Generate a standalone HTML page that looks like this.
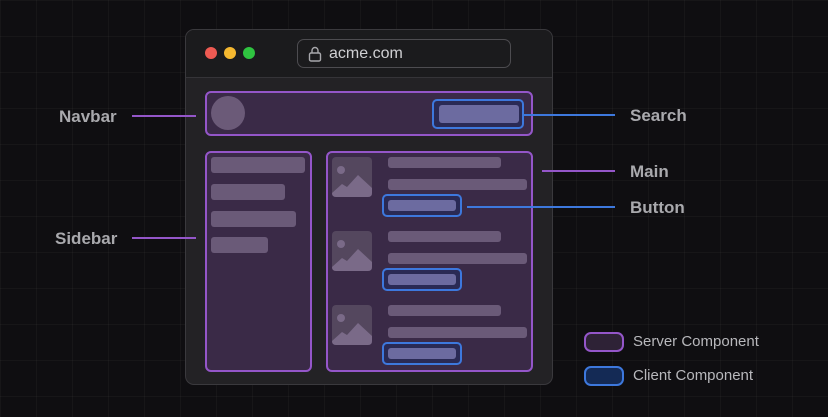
<!DOCTYPE html><html><head><style>
*{margin:0;padding:0;box-sizing:border-box}
body{width:828px;height:417px;overflow:hidden;background:#0f0e11;position:relative;font-family:"Liberation Sans",sans-serif;
background-image:linear-gradient(rgba(255,255,255,0.03) 1px,transparent 1px),linear-gradient(90deg,rgba(255,255,255,0.03) 1px,transparent 1px);background-size:36px 36px}
.a{position:absolute}
.win{left:185px;top:29px;width:368px;height:356px;border-radius:9px;background:#232225;border:1px solid #3a393d;overflow:hidden}
.tb{left:0;top:0;width:100%;height:48px;background:#1b1b1d;border-bottom:1px solid #353438}
.dot{width:12px;height:12px;border-radius:50%;top:17px}
.url{left:111px;top:9px;width:214px;height:29px;border:1px solid #4d4c50;border-radius:7px;color:#cfcfd2;font-size:16px;padding:5px 0 0 31px}
.p{border:2px solid #9456c9;background:#3a2a47;border-radius:6px}
.b{border:2px solid #3d78dd;border-radius:5px;background:#2a2a55}
.bi{background:#6c6ba0;border-radius:3px}
.g{background:#6a5a78;border-radius:3px}
.lbl{color:#a9a9ad;font-weight:bold;font-size:17px}
.ln{height:2px}
.lp{background:#9456c9}.lb{background:#3d78dd}
.lg{color:#b8b8bc;font-size:15px}
</style></head><body>
<div class="a win">
 <div class="a tb">
  <div class="a dot" style="left:19px;background:#ee5a52"></div>
  <div class="a dot" style="left:38px;background:#f5b830"></div>
  <div class="a dot" style="left:57px;background:#2fc440"></div>
  <div class="a url">acme.com
   <svg class="a" style="left:10px;top:6px" width="14" height="16" viewBox="0 0 14 16"><rect x="1.5" y="7" width="11" height="8" rx="1.5" fill="none" stroke="#a8a8ac" stroke-width="1.4"/><path d="M4 7V4.5a3 3 0 0 1 6 0V7" fill="none" stroke="#a8a8ac" stroke-width="1.4"/></svg>
  </div>
 </div>
</div>
<div class="a p" style="left:205px;top:91px;width:328px;height:45px"></div>
<div class="a" style="left:211px;top:96px;width:34px;height:34px;border-radius:50%;background:#6b5a78"></div>
<div class="a b" style="left:432px;top:99px;width:92px;height:30px"></div>
<div class="a bi" style="left:439px;top:105px;width:80px;height:18px"></div>

<div class="a p" style="left:205px;top:151px;width:107px;height:221px"></div>
<div class="a g" style="left:211px;top:157px;width:94px;height:16px"></div>
<div class="a g" style="left:211px;top:184px;width:74px;height:16px"></div>
<div class="a g" style="left:211px;top:211px;width:85px;height:16px"></div>
<div class="a g" style="left:211px;top:237px;width:57px;height:16px"></div>

<div class="a p" style="left:326px;top:151px;width:207px;height:221px"></div>
<div id="rows"></div>
<script>
var h='';[0,74,148].forEach(function(o){var t=157+o;
h+='<div class="a g" style="left:332px;top:'+t+'px;width:40px;height:40px;border-radius:4px;background:#54475e"></div>';
h+='<svg class="a" style="left:332px;top:'+t+'px" width="40" height="40" viewBox="0 0 40 40"><circle cx="9" cy="13" r="4" fill="#7a6a88"/><path d="M0 36 L10 27 L15 30 L26 18 L40 31 V36 Q40 40 36 40 H4 Q0 40 0 36Z" fill="#7a6a88"/></svg>';
h+='<div class="a g" style="left:388px;top:'+t+'px;width:113px;height:11px"></div>';
h+='<div class="a g" style="left:388px;top:'+(t+22)+'px;width:139px;height:11px"></div>';
h+='<div class="a b" style="left:382px;top:'+(t+37)+'px;width:80px;height:23px"></div>';
h+='<div class="a bi" style="left:388px;top:'+(t+43)+'px;width:68px;height:11px"></div>';});
document.getElementById('rows').outerHTML=h;
</script>

<div class="a lbl" style="left:59px;top:107px">Navbar</div>
<div class="a ln lp" style="left:132px;top:115px;width:64px"></div>
<div class="a lbl" style="left:55px;top:229px">Sidebar</div>
<div class="a ln lp" style="left:132px;top:237px;width:64px"></div>
<div class="a lbl" style="left:630px;top:106px">Search</div>
<div class="a ln lb" style="left:523px;top:114px;width:92px"></div>
<div class="a lbl" style="left:630px;top:162px">Main</div>
<div class="a ln lp" style="left:542px;top:170px;width:73px"></div>
<div class="a lbl" style="left:630px;top:198px">Button</div>
<div class="a ln lb" style="left:467px;top:206px;width:148px"></div>

<div class="a" style="left:584px;top:332px;width:40px;height:20px;border:2px solid #9456c9;border-radius:7px;background:#2e2236"></div>
<div class="a lg" style="left:633px;top:333px">Server Component</div>
<div class="a" style="left:584px;top:366px;width:40px;height:20px;border:2px solid #3d78dd;border-radius:7px;background:#142a55"></div>
<div class="a lg" style="left:633px;top:367px">Client Component</div>
</body></html>
